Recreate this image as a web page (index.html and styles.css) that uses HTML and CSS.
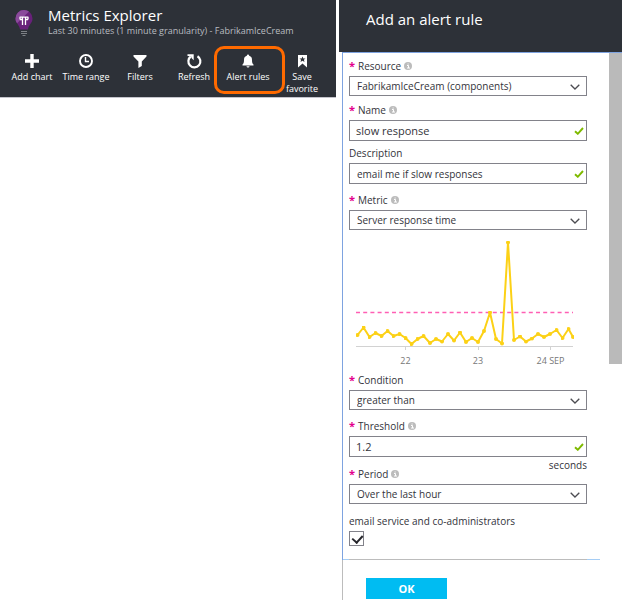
FILE: index.html
```html
<!DOCTYPE html>
<html lang="en">
<head>
<meta charset="utf-8">
<title>Metrics Explorer</title>
<link rel="stylesheet" href="styles.css">
</head>
<body>
<svg class="defs" aria-hidden="true">
  <symbol id="info" viewBox="0 0 8 8"><circle cx="4" cy="4" r="4" fill="#bcbcbc"/><path d="M3 3.500h1.500V6M3 6h3M3.600 2h1" stroke="#fff" fill="none"/></symbol>
  <symbol id="chevron" viewBox="0 0 10 6"><path d="M.7.7 5 5 9.300.7" stroke="#4c4c52" stroke-width="1.300" fill="none"/></symbol>
  <symbol id="tick" viewBox="0 0 10 8"><path d="M1 4.200 3.800 6.800 9 1" stroke="#7fba00" stroke-width="1.900" fill="none"/></symbol>
  <marker id="dot" viewBox="0 0 4 4" refX="2" refY="2" markerWidth="4" markerHeight="4" markerUnits="userSpaceOnUse"><circle cx="2" cy="2" r="2" fill="#fcd116"/></marker>
</svg>
<div class="blades">
  <main class="explorer">
    <header class="explorer-header">
      <div class="heading">
        <svg class="bulb" viewBox="0 0 18 28" aria-hidden="true">
          <path d="M9 1a8.500 8.500 0 0 0-8.500 8.500c0 5 4 6 4.500 11h8c.5-5 4.500-6 4.500-11A8.500 8.500 0 0 0 9 1z" fill="#68217a"/>
          <path d="M9 1a8.500 8.500 0 0 0-8.500 8.500c0 2 .7 3.500 1.600 4.800L14 2.600A8.400 8.400 0 0 0 9 1z" fill="#8a4a9b"/>
          <path d="M7.500 16V8.500M10.500 16V8.500M5 10.500h2.500M10.500 10.500H13M5 10.500V8.200H13V10.500" stroke="#fff" stroke-width="1.300" stroke-linejoin="round" fill="none"/>
          <path d="M6 22.500h6M6 24.500h6M7.500 26.500h3" stroke="#7d8186"/>
        </svg>
        <div>
          <h1>Metrics Explorer</h1>
          <p>Last 30 minutes (1 minute granularity) - FabrikamIceCream</p>
        </div>
      </div>
      <nav class="toolbar">
        <button type="button"><svg viewBox="0 0 16 16"><path d="M8 1v14M1 8h14" stroke="#fff" stroke-width="3.400"/></svg><span>Add chart</span></button>
        <button type="button"><svg viewBox="0 0 16 16"><circle cx="8" cy="8" r="6" fill="none" stroke="#fff" stroke-width="1.900"/><path d="M7.500 4v4.500H11" stroke="#fff" stroke-width="1.400" fill="none"/></svg><span>Time range</span></button>
        <button type="button"><svg viewBox="0 0 16 16"><path d="M1.500 2h13v1.500L9.800 8.500V13L6.400 15V8.500L1.500 3.500z" fill="#fff"/></svg><span>Filters</span></button>
        <button type="button"><svg viewBox="0 0 16 16"><path d="M11.500 3.200A6 6 0 1 1 4.800 3.500" fill="none" stroke="#fff" stroke-width="2.200"/><path d="M1.500 1.200h6.200v6.100L5.700 5.300 5 3.300 1.500 3z" fill="#fff"/></svg><span>Refresh</span></button>
        <button type="button" class="highlighted"><svg viewBox="0 0 16 16"><path d="M8 1.500c.7 0 1.100.4 1.200 1.200C11.400 3.300 12 5 12 7c0 2.500.3 3.500 1.500 4.500v1h-11v-1C3.700 10.500 4 9.500 4 7c0-2 .6-3.700 2.800-4.300.1-.8.5-1.200 1.200-1.200zM6.500 13.200h3c-.2 1-.7 1.400-1.500 1.400s-1.300-.4-1.500-1.400z" fill="#fff"/></svg><span>Alert rules</span></button>
        <button type="button"><svg viewBox="0 0 16 16"><path d="M4 2h9v12.500L8.500 10.500 4 14.500z" fill="#fff"/><path d="m8.500 3.400.9 2h2.100L9.900 6.800l.6 2.200-2-1.200-2 1.200.6-2.200-1.600-1.400h2.100z" fill="#2d3138"/></svg><span>Save<br>favorite</span></button>
      </nav>
    </header>
  </main>

  <aside class="alert-blade">
    <header class="alert-header"><h2>Add an alert rule</h2></header>
    <form>
      <div class="scroll-area">
        <div class="fields">
          <div class="field">
            <label for="resource"><b>*</b>Resource <svg><use href="#info"/></svg></label>
            <div class="control"><select id="resource"><option>FabrikamIceCream (components)</option></select><svg class="chevron"><use href="#chevron"/></svg></div>
          </div>
          <div class="field">
            <label for="name"><b>*</b>Name <svg><use href="#info"/></svg></label>
            <div class="control"><input type="text" class="editing" id="name" value="slow response"><svg class="tick"><use href="#tick"/></svg></div>
          </div>
          <div class="field">
            <label for="description">Description</label>
            <div class="control"><input type="text" id="description" value="email me if slow responses"><svg class="tick"><use href="#tick"/></svg></div>
          </div>
          <div class="field">
            <label for="metric"><b>*</b>Metric <svg><use href="#info"/></svg></label>
            <div class="control"><select id="metric"><option>Server response time</option></select><svg class="chevron"><use href="#chevron"/></svg></div>
          </div>
          <svg class="chart" viewBox="356 236 218 134" role="img" aria-label="Server response time">
            <path d="M356 346.500H573M405.500 347v3M478.500 347v3M550.500 347v3" stroke="#d2d2d2"/>
            <path d="M356 312.500H573" stroke="#ff5fb4" stroke-width="1.500" stroke-dasharray="4 3.200"/>
            <polyline class="series" points="357.500,335 363.500,327.500 369.500,337 375.500,333 381.500,336 387.500,331 393.500,336 399.500,334 405.500,338 411.500,344 417.500,339 423.500,336 430,343 436,339 442,341.500 448,334 454,340.500 460,332.500 466,342 472,338 478,342 484,331 490,312.500 496,339 502,343.500 508,242.500 514,340 520,336.500 526,341.500 532,338.500 538,334 544,337 550,334 556.500,330 562.500,338 568.500,329 573,337"/>
            <g class="axis"><text x="405.500" y="364">22</text><text x="478" y="364">23</text><text x="550.500" y="364">24 SEP</text></g>
          </svg>
          <div class="field">
            <label for="condition"><b>*</b>Condition</label>
            <div class="control"><select id="condition"><option>greater than</option></select><svg class="chevron"><use href="#chevron"/></svg></div>
          </div>
          <div class="field">
            <label for="threshold"><b>*</b>Threshold <svg><use href="#info"/></svg></label>
            <div class="control"><input type="text" class="editing" id="threshold" value="1.2"><svg class="tick"><use href="#tick"/></svg></div>
            <span class="unit">seconds</span>
          </div>
          <div class="field">
            <label for="period"><b>*</b>Period <svg><use href="#info"/></svg></label>
            <div class="control"><select id="period"><option>Over the last hour</option></select><svg class="chevron"><use href="#chevron"/></svg></div>
          </div>
          <div class="field">
            <label for="admins">email service and co-administrators</label>
            <input type="checkbox" id="admins" checked>
          </div>
        </div>
        <div class="scrollbar"></div>
      </div>
      <footer><button type="submit">OK</button></footer>
    </form>
  </aside>
</div>
</body>
</html>
```
FILE: styles.css
```css
* { box-sizing: border-box; }
body, h1, h2, p { margin: 0; font-weight: 400; }
body, button, input, select { font-family: "Open Sans", "Noto Sans", sans-serif; }
body { background: #fff; color: #33333a; font-size: 10px; }
svg { display: block; }
.defs { position: absolute; width: 0; height: 0; }

.blades {
  display: grid;
  grid-template-columns: 336fr 283fr;
  gap: 3px;
  min-height: 100vh;
  padding-right: 3px;
}

.explorer-header {
  background: #2d3138;
  color: #fff;
  border-bottom: 1px solid #c4c4cc;
  padding: 6px 5px 2px;
}
.heading { display: flex; gap: 15px; padding-left: 10px; }
.bulb { width: 18px; height: 28px; margin-top: 3px; }
h1 { font-size: 15px; line-height: 19px; }
.heading p { font-size: 9px; line-height: 12px; color: #b9bcc0; }
.toolbar { display: flex; margin-top: 16px; }
.toolbar button {
  position: relative;
  width: 54px;
  padding: 0;
  border: 0;
  background: none;
  color: #fff;
  font-size: 9px;
  line-height: 12px;
  display: flex;
  flex-direction: column;
  align-items: center;
  gap: 2px;
}
.toolbar svg { width: 16px; height: 16px; }
.toolbar .highlighted::after {
  content: "";
  position: absolute;
  inset: -7px -10px 1px -7px;
  border: 3px solid #ff6a00;
  border-radius: 10px;
}

.alert-blade { display: flex; flex-direction: column; }
.alert-header { background: #2d3138; color: #fff; padding: 9px 27px 23px; }
h2 { font-size: 15px; line-height: 20px; }
form { flex: 1; display: flex; flex-direction: column; margin-left: 3px; }
.scroll-area {
  display: flex;
  align-items: flex-start;
  border-top: 1px solid #7ea3e0;
  border-left: 1px solid #7ea3e0;
}
.fields {
  position: relative;
  flex: 1;
  min-width: 0;
  padding: 5px 22px 14px 6px;
}
.fields::after {
  content: "";
  position: absolute;
  left: 0;
  right: 9px;
  bottom: 0;
  height: 1px;
  background: linear-gradient(to right, #a5cdf5 6px, #bcbcbc 6px calc(100% - 13px), #a5cdf5 calc(100% - 13px));
}
.scrollbar { width: 13px; height: 311px; background: #bababa; }

.field { display: flex; flex-direction: column; gap: 2px; margin-bottom: 8px; }
.field:first-child { margin-bottom: 6px; }
.field:nth-child(2) { margin-bottom: 4px; }
.field:last-child { margin: 9px 0 0; }
label { display: flex; align-items: center; gap: 3px; line-height: 16px; white-space: nowrap; }
label b { color: #e3008c; width: 6px; font-size: 11px; }
label svg { width: 8px; height: 8px; }
.control { position: relative; }
select, input[type="text"] {
  display: block;
  appearance: none;
  width: 100%;
  height: 21px;
  margin: 0;
  padding: 0 24px 0 7px;
  border: 1px solid #82828a;
  border-radius: 0;
  background: #fff;
  color: #33333a;
  font-size: 10px;
}
select { height: 20px; }
input.editing { padding-left: 6px; font-size: 11px; }
.chevron { position: absolute; right: 7px; top: 8px; width: 10px; height: 6px; }
.tick { position: absolute; right: 3px; top: 7px; width: 10px; height: 8px; }
.unit { align-self: flex-end; line-height: 12px; margin-bottom: -13px; }

.chart { width: calc(100% - 20px); margin: -2px 7px 2px; }
.series {
  fill: none;
  stroke: #fcd116;
  stroke-width: 2;
  stroke-linejoin: round;
  marker: url(#dot);
}
.axis { font-size: 9px; text-anchor: middle; fill: #777; }

input[type="checkbox"] {
  appearance: none;
  width: 15px;
  height: 15px;
  margin: 0;
  border: 1px solid #82828a;
  position: relative;
}
input[type="checkbox"]:checked::after {
  content: "";
  position: absolute;
  left: 4px;
  top: 1px;
  width: 5px;
  height: 8px;
  border: solid #26262c;
  border-width: 0 2px 2px 0;
  transform: rotate(42deg);
}

footer { flex: 1; border-left: 1px solid #bcbcbc; padding: 18px 23px 1px; }
footer button {
  display: block;
  width: 81px;
  height: 21px;
  padding: 0;
  border: 0;
  background: #00bcf2;
  color: #fff;
  font-size: 11px;
  font-weight: 700;
}
```
